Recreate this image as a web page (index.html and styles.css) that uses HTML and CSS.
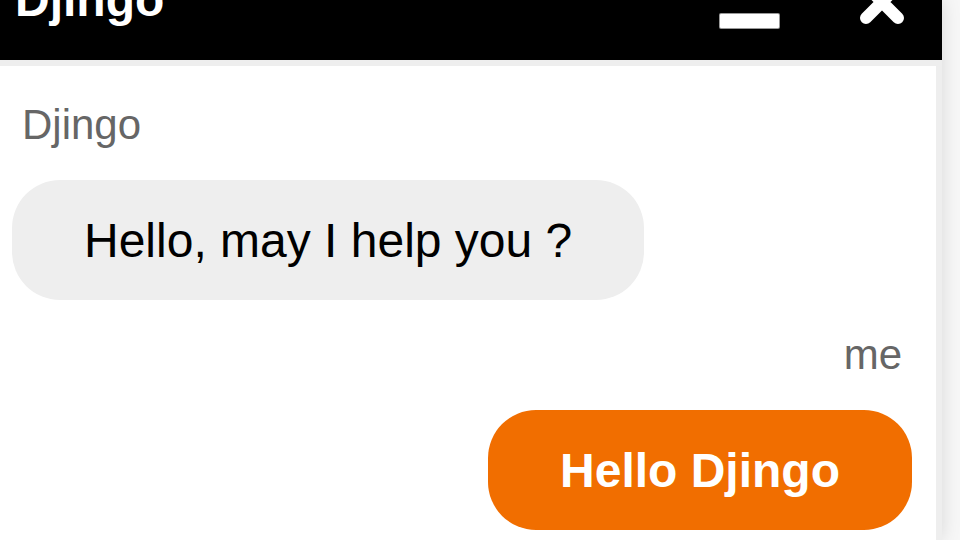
FILE: index.html
```html
<!DOCTYPE html>
<html lang="en">
<head>
<meta charset="utf-8">
<title>Djingo chat</title>
<link rel="stylesheet" href="styles.css">
</head>
<body>
<div class="widget">
  <header class="header">
    <span class="title">Djingo</span>
    <span class="minimize" aria-label="Minimize"></span>
    <svg class="close" viewBox="0 0 48 48" aria-label="Close">
      <path d="M8 8 L40 40 M40 8 L8 40" stroke="#fff" stroke-width="12" stroke-linecap="round" fill="none"/>
    </svg>
  </header>
  <main class="chat">
    <div class="group bot">
      <div class="label">Djingo</div>
      <div class="bubble">Hello, may I help you ?</div>
    </div>
    <div class="group user">
      <div class="label">me</div>
      <div class="bubble">Hello Djingo</div>
    </div>
  </main>
</div>
</body>
</html>
```
FILE: styles.css
```css
html, body {
  margin: 0;
  padding: 0;
  height: 540px;
  overflow: hidden;
  background: #f7f7f7;
  font-family: "Liberation Sans", Arial, sans-serif;
}

.widget {
  width: 942px;
  box-shadow: 0 0 18px rgba(0, 0, 0, 0.13);
}

.header {
  display: flex;
  align-items: flex-start;
  height: 60px;
  background: #000;
}

.title {
  margin-top: -24px;
  padding-left: 15px;
  font-size: 48px;
  line-height: 48px;
  font-weight: 700;
  color: #fff;
}

.minimize {
  margin-left: auto;
  margin-top: 14px;
  width: 59px;
  height: 14px;
  background: #fff;
  border-radius: 1px;
  box-shadow: 0 0 0 1px rgba(255, 255, 255, 0.6);
}

.close {
  flex-shrink: 0;
  width: 48px;
  height: 48px;
  margin-top: -22px;
  margin-left: 79px;
  margin-right: 36px;
}

.chat {
  box-sizing: border-box;
  height: 480px;
  display: flex;
  flex-direction: column;
  gap: 31px;
  padding: 35px 24px 0 12px;
  background: #fff;
  border-top: 6px solid #eee;
  border-right: 6px solid #eee;
}

.group {
  display: flex;
  flex-direction: column;
}

.group.bot {
  align-items: flex-start;
}

.group.user {
  align-items: flex-end;
}

.label {
  font-size: 42px;
  line-height: 48px;
  color: #666;
  margin-bottom: 31px;
}

.bot .label {
  padding-left: 10px;
}

.user .label {
  padding-right: 10px;
}

.bubble {
  font-size: 48px;
  line-height: 48px;
  padding: 37px 72px 35px;
  border-radius: 48px;
  white-space: nowrap;
}

.bot .bubble {
  background: #eee;
  color: #000;
}

.user .bubble {
  background: #f16e00;
  color: #fff;
  font-weight: 700;
}
```
